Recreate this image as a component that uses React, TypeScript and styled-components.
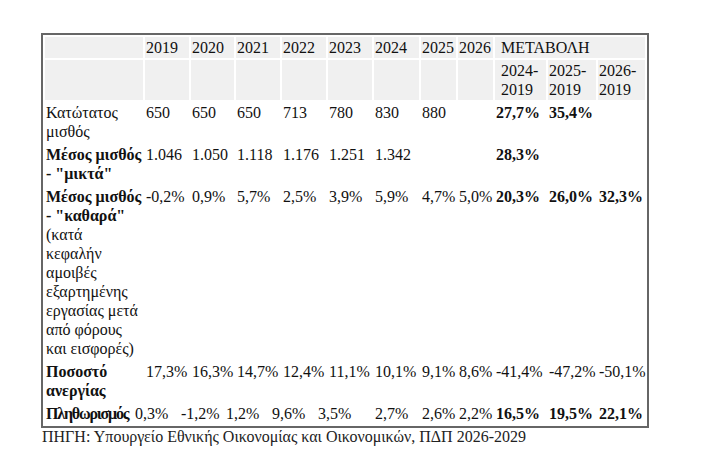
import React from "react";
import styled, { createGlobalStyle } from "styled-components";

const serif = `"Liberation Serif", "Times New Roman", "DejaVu Serif", serif`;

const GlobalStyle = createGlobalStyle`
  html, body {
    margin: 0;
    padding: 0;
    background: #fff;
  }
  body {
    font-family: ${serif};
    color: #111;
  }
`;

const Page = styled.div`
  padding: 33px 0 0 41px;
  font-family: ${serif};
`;

const Table = styled.table`
  table-layout: fixed;
  width: 607px;
  border: 2px solid #666;
  border-spacing: 2px;
  font-family: ${serif};
  font-size: 16px;
  line-height: 19px;
  color: #111;

  th,
  td {
    font-family: ${serif};
  }
`;

const Head = styled.th<{ $pad?: number }>`
  background: #f0f0f0;
  font-weight: normal;
  text-align: left;
  vertical-align: top;
  white-space: nowrap;
  padding: 1px 1px 1px ${(p) => p.$pad ?? 1}px;
`;

const Label = styled.td`
  padding: 1px;
  vertical-align: top;
  white-space: nowrap;
`;

const Strong = styled.b<{ $tight?: boolean }>`
  font-weight: 700;
  letter-spacing: ${(p) => (p.$tight ? "-1.2px" : "normal")};
`;

const Cell = styled.td<{ $bold?: boolean; $shift?: number }>`
  padding: 1px;
  vertical-align: top;
  white-space: nowrap;
  font-weight: ${(p) => (p.$bold ? 700 : 400)};
  text-indent: ${(p) => p.$shift ?? 0}px;
`;

const Source = styled.div`
  font-size: 16px;
  line-height: 18px;
  color: #222;
  padding-left: 1px;
`;

const widths = [98, 44, 43, 44, 44, 44, 45, 35, 35, 51, 48, 47];
const years = ["2019", "2020", "2021", "2022", "2023", "2024", "2025", "2026"];

type Value = { v: string; b?: boolean };
const v = (s: string, b?: boolean): Value => ({ v: s, b });

interface Row {
  label: React.ReactNode;
  values: Value[];
  shift?: number; // first five values sit left of their column in the source
}

const rows: Row[] = [
  {
    label: (
      <>
        Κατώτατος
        <br />
        μισθός
      </>
    ),
    values: [
      v("650"), v("650"), v("650"), v("713"), v("780"), v("830"), v("880"), v(""),
      v("27,7%", true), v("35,4%", true), v(""),
    ],
  },
  {
    label: (
      <Strong>
        Μέσος μισθός
        <br />- "μικτά"
      </Strong>
    ),
    values: [
      v("1.046"), v("1.050"), v("1.118"), v("1.176"), v("1.251"), v("1.342"), v(""), v(""),
      v("28,3%", true), v(""), v(""),
    ],
  },
  {
    label: (
      <>
        <Strong>
          Μέσος μισθός
          <br />- "καθαρά"
        </Strong>
        <br />
        (κατά
        <br />
        κεφαλήν
        <br />
        αμοιβές
        <br />
        εξαρτημένης
        <br />
        εργασίας μετά
        <br />
        από φόρους
        <br />
        και εισφορές)
      </>
    ),
    values: [
      v("-0,2%"), v("0,9%"), v("5,7%"), v("2,5%"), v("3,9%"), v("5,9%"), v("4,7%"), v("5,0%"),
      v("20,3%", true), v("26,0%", true), v("32,3%", true),
    ],
  },
  {
    label: (
      <Strong>
        Ποσοστό
        <br />
        ανεργίας
      </Strong>
    ),
    values: [
      v("17,3%"), v("16,3%"), v("14,7%"), v("12,4%"), v("11,1%"), v("10,1%"), v("9,1%"), v("8,6%"),
      v("-41,4%"), v("-47,2%"), v("-50,1%"),
    ],
  },
  {
    label: <Strong $tight>Πληθωρισμός</Strong>,
    shift: -11,
    values: [
      v("0,3%"), v("-1,2%"), v("1,2%"), v("9,6%"), v("3,5%"), v("2,7%"), v("2,6%"), v("2,2%"),
      v("16,5%", true), v("19,5%", true), v("22,1%", true),
    ],
  },
];

export default function App() {
  return (
    <Page>
      <GlobalStyle />
      <Table>
        <colgroup>
          {widths.map((w, i) => (
            <col key={i} style={{ width: w }} />
          ))}
        </colgroup>
        <thead>
          <tr>
            <Head />
            {years.map((y) => (
              <Head key={y}>{y}</Head>
            ))}
            <Head colSpan={3} $pad={6}>
              ΜΕΤΑΒΟΛΗ
            </Head>
          </tr>
          <tr>
            <Head />
            {years.map((y) => (
              <Head key={y} />
            ))}
            <Head $pad={6}>
              2024-
              <br />
              2019
            </Head>
            <Head>
              2025-
              <br />
              2019
            </Head>
            <Head>
              2026-
              <br />
              2019
            </Head>
          </tr>
        </thead>
        <tbody>
          {rows.map((r, i) => (
            <tr key={i}>
              <Label>{r.label}</Label>
              {r.values.map((c, j) => (
                <Cell key={j} $bold={c.b} $shift={r.shift && j < 5 ? r.shift : 0}>
                  {c.v}
                </Cell>
              ))}
            </tr>
          ))}
        </tbody>
      </Table>
      <Source>ΠΗΓΗ: Υπουργείο Εθνικής Οικονομίας και Οικονομικών, ΠΔΠ 2026-2029</Source>
    </Page>
  );
}
